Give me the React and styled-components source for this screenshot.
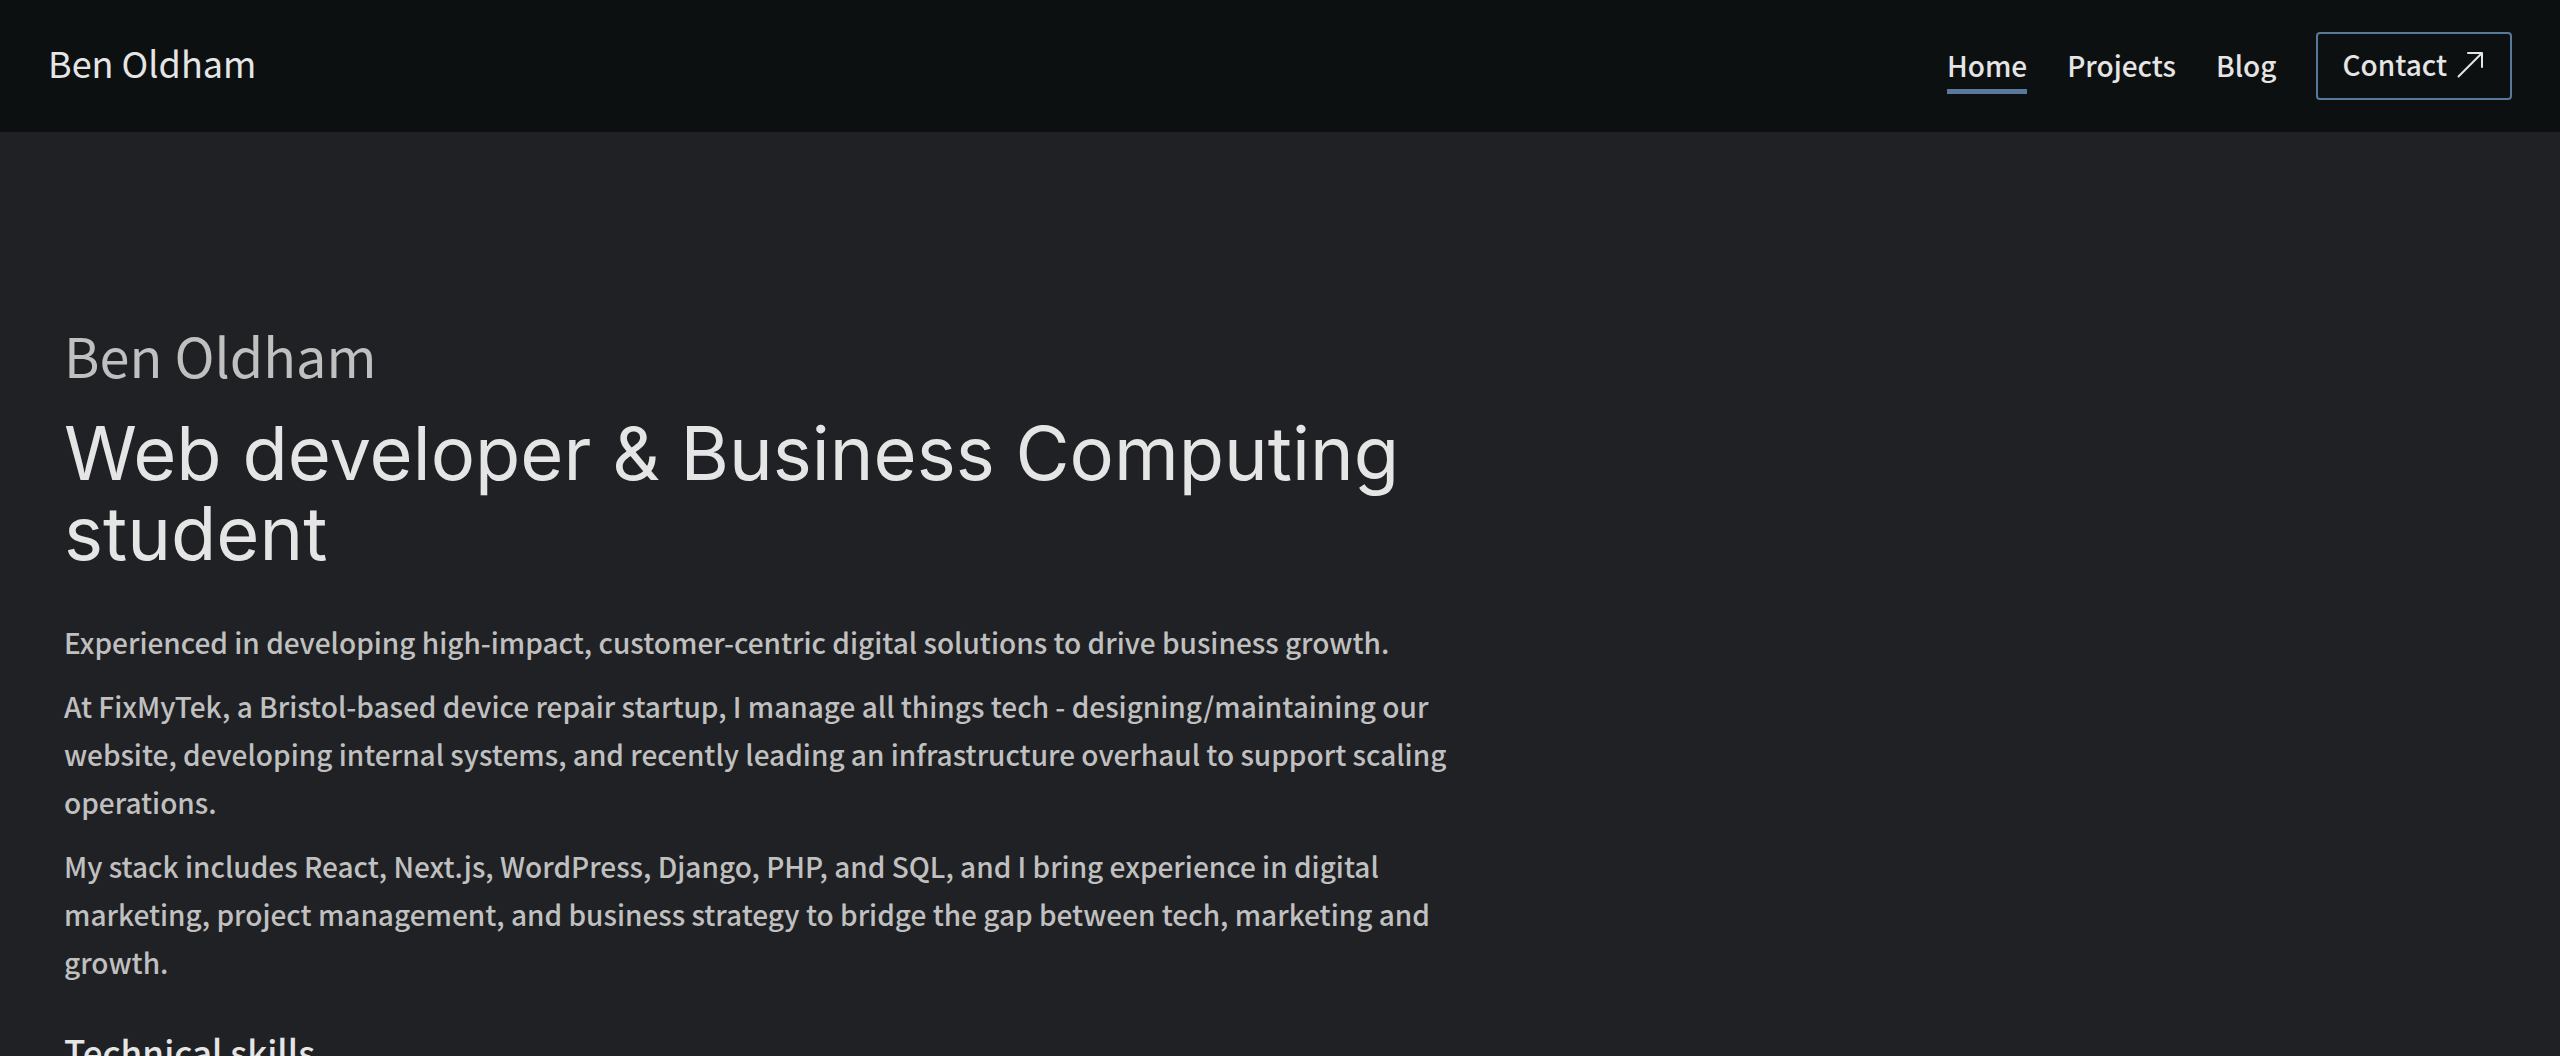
import React from "react";
import styled, { createGlobalStyle } from "styled-components";

const GlobalStyle = createGlobalStyle`
  *, *::before, *::after { box-sizing: border-box; }
  body {
    margin: 0;
    background: #202124;
    color: #e5e5e5;
    font-family: "Noto Sans CJK JP", "Noto Sans", sans-serif;
    font-weight: 500;
  }
  h1, h2, p { margin: 0; }
`;

const Page = styled.div`
  height: 100vh;
  overflow-y: auto;
  scrollbar-width: none;
`;

const Header = styled.header`
  display: flex;
  align-items: center;
  justify-content: space-between;
  padding: 32px 48px;
  background: #0d1011;
`;

const Brand = styled.a`
  padding-bottom: 8px;
  color: inherit;
  font-size: 36px;
  font-weight: 400;
  line-height: 60px;
  text-decoration: none;
`;

const Nav = styled.nav`
  display: flex;
  align-items: center;
  gap: 40px;
`;

const NavLink = styled.a`
  padding-top: 2px;
  color: inherit;
  font-size: 28px;
  line-height: 48px;
  text-decoration: none;
  border-bottom: 5px solid ${(p) => (p.$active ? "#58799a" : "transparent")};
`;

const ContactLink = styled.a`
  display: flex;
  align-items: center;
  gap: 10px;
  padding: 6px 26px 10px 24px;
  border: 2px solid #58799a;
  border-radius: 4px;
  color: inherit;
  font-size: 28px;
  line-height: 48px;
  text-decoration: none;
`;

const Hero = styled.main`
  width: 60%;
  padding: 183px 64px 64px;
`;

const Name = styled.p`
  color: #c0c0c0;
  font-size: 54px;
  font-weight: 400;
  line-height: 80px;
`;

const Title = styled.h1`
  margin-top: 18px;
  font-family: Inter, sans-serif;
  font-size: 74px;
  font-weight: 400;
  line-height: 80px;
`;

const Copy = styled.div`
  display: flex;
  flex-direction: column;
  gap: 16px;
  margin-top: 45px;
  color: #c0c0c0;
  font-size: 28px;
  line-height: 48px;
`;

const SkillsTitle = styled.h2`
  margin-top: 35px;
  font-size: 35px;
  font-weight: 500;
  line-height: 60px;
`;

const links = [
  { label: "Home", active: true },
  { label: "Projects" },
  { label: "Blog" },
];

const paragraphs = [
  "Experienced in developing high-impact, customer-centric digital solutions to drive business growth.",
  "At FixMyTek, a Bristol-based device repair startup, I manage all things tech - designing/maintaining our website, developing internal systems, and recently leading an infrastructure overhaul to support scaling operations.",
  "My stack includes React, Next.js, WordPress, Django, PHP, and SQL, and I bring experience in digital marketing, project management, and business strategy to bridge the gap between tech, marketing and growth.",
];

const ArrowIcon = () => (
  <svg width="27" height="27" viewBox="0 0 27 27" fill="none" stroke="currentColor" strokeWidth="2" strokeLinecap="round" strokeLinejoin="round" aria-hidden="true">
    <path d="M1.5 25.5 25 2M11 2h14v14" />
  </svg>
);

export default function App() {
  return (
    <Page>
      <GlobalStyle />
      <Header>
        <Brand href="#home">Ben Oldham</Brand>
        <Nav>
          {links.map((l) => (
            <NavLink key={l.label} href={`#${l.label.toLowerCase()}`} $active={l.active} aria-current={l.active ? "page" : undefined}>
              {l.label}
            </NavLink>
          ))}
          <ContactLink href="#contact">
            Contact
            <ArrowIcon />
          </ContactLink>
        </Nav>
      </Header>
      <Hero>
        <Name>Ben Oldham</Name>
        <Title>Web developer &amp; Business Computing student</Title>
        <Copy>
          {paragraphs.map((text) => (
            <p key={text}>{text}</p>
          ))}
        </Copy>
        <SkillsTitle>Technical skills</SkillsTitle>
      </Hero>
    </Page>
  );
}
